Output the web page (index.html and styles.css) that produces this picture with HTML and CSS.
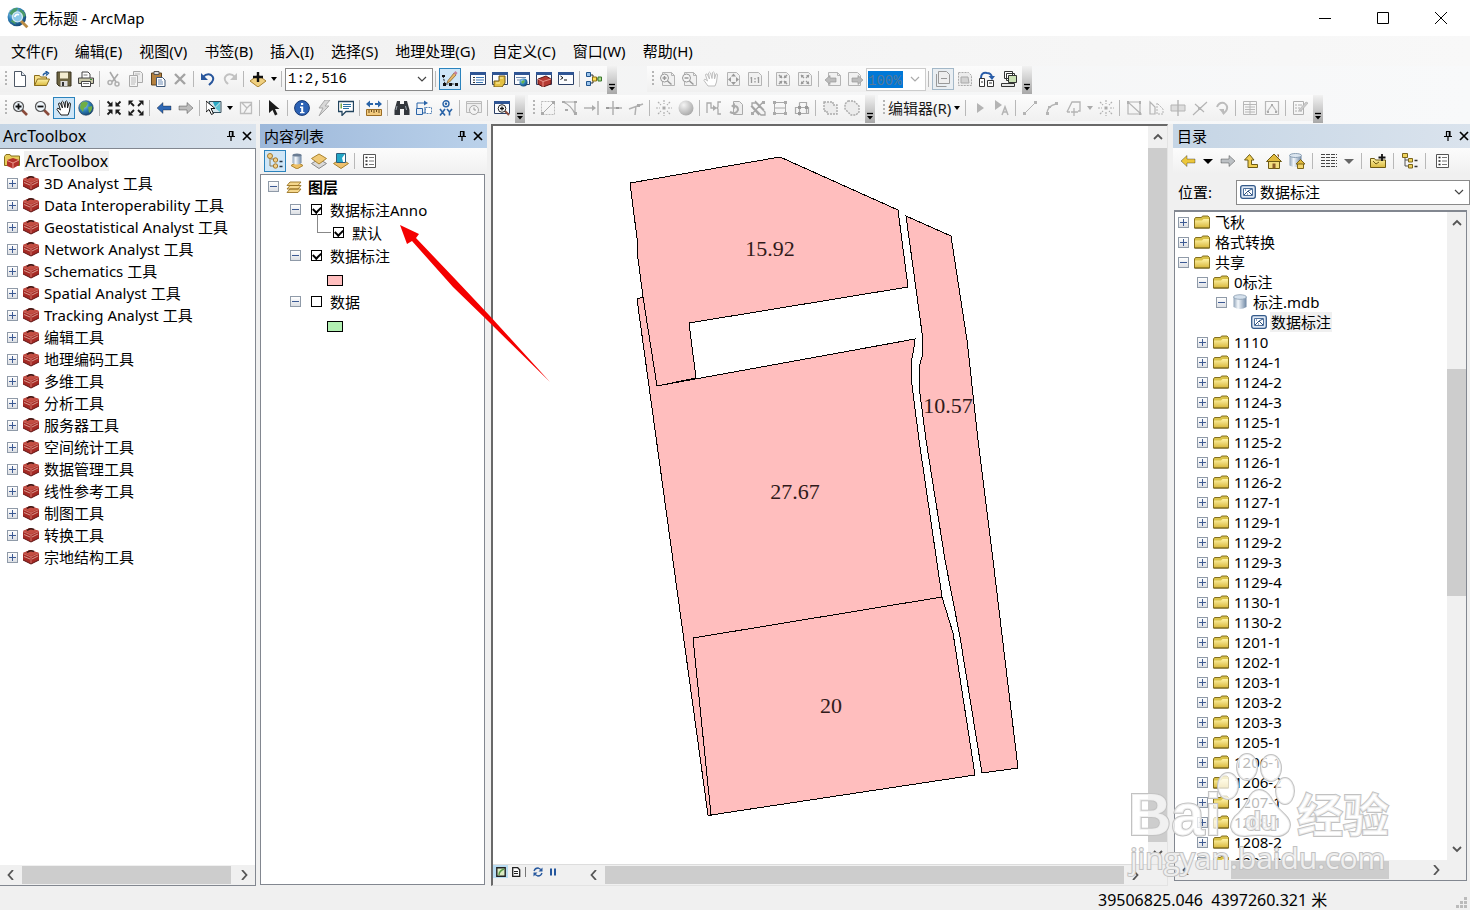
FILE: index.html
```html
<!DOCTYPE html>
<html lang="zh-CN">
<head>
<meta charset="utf-8">
<title>无标题 - ArcMap</title>
<link rel="stylesheet" href="styles.css">
</head>
<body>
<svg class="defs" aria-hidden="true">
  <defs>
    <linearGradient id="gFold" x1="0" y1="0" x2="0" y2="1"><stop offset="0" stop-color="#fff3a6"/><stop offset="1" stop-color="#d9b93f"/></linearGradient>
    <linearGradient id="gCyl"><stop offset="0" stop-color="#8fa3b8"/><stop offset=".35" stop-color="#f4f8fc"/><stop offset="1" stop-color="#6d86a3"/></linearGradient>
    <radialGradient id="gGlobe" cx=".35" cy=".3" r=".8"><stop offset="0" stop-color="#a8d8f4"/><stop offset=".5" stop-color="#2c7fb8"/><stop offset="1" stop-color="#123c66"/></radialGradient>
    <radialGradient id="gBall" cx=".35" cy=".3" r=".8"><stop offset="0" stop-color="#f4f4f4"/><stop offset="1" stop-color="#a2a2a2"/></radialGradient>
  </defs>
  <symbol id="new" viewBox="0 0 16 16"><path d="M2.500 .5h7l4 4v11h-11z" fill="#fff" stroke="#4d5765"/><path d="M9.500 .5v4h4" fill="#dfe6ee" stroke="#4d5765"/></symbol>
  <symbol id="open" viewBox="0 0 16 16"><path d="M.5 14.500v-10h5l1 1.500h6v2" fill="#f7e08a" stroke="#8a6d1c"/><path d="M.5 14.500l3-6.500h12l-3 6.500z" fill="url(#gFold)" stroke="#8a6d1c"/><path d="M9 4.500q1-3 4-2.500M11.500 0l3 2-2.500 2.500" fill="none" stroke="#205a9c" stroke-width="1.400"/></symbol>
  <symbol id="save" viewBox="0 0 16 16"><path d="M1 1h14v14H3l-2-2z" fill="#6c6340" stroke="#38331f"/><path d="M4 1.500h8v6H4z" fill="#f3ecd0"/><path d="M4.500 10h7v5h-7z" fill="#ddd"/><path d="M6 11h2v4H6z" fill="#333"/></symbol>
  <symbol id="print" viewBox="0 0 16 16"><path d="M4 7V1h6l2 2v4" fill="#fff" stroke="#444"/><path d="M.5 7h15v5.500H.5z" fill="#c9c7a9" stroke="#444"/><path d="M3.500 10.500h9v5h-9z" fill="#fff" stroke="#444"/><path d="M5 12.500h6M5.500 4h4" stroke="#777"/><path d="M12 8.500h2" stroke="#3a9a3a"/></symbol>
  <symbol id="cut" viewBox="0 0 16 16"><path d="M4 1l6 10M12 3L6 11" fill="none" stroke="#a8a8a8" stroke-width="1.600"/><circle cx="4" cy="11.500" r="2" fill="none" stroke="#b0b0b0" stroke-width="1.500"/><circle cx="11" cy="13" r="2" fill="none" stroke="#b0b0b0" stroke-width="1.500"/></symbol>
  <symbol id="copy" viewBox="0 0 16 16"><path d="M5.500 .5h7l2 2v9h-9z" fill="#eee" stroke="#aaa"/><path d="M1.500 4.500h8v11h-8z" fill="#f5f5f5" stroke="#aaa"/><path d="M3 7h5M3 9h5M3 11h5M3 13h4M7 3h5" stroke="#bbb"/></symbol>
  <symbol id="paste" viewBox="0 0 16 16"><path d="M1.500 2h10v12h-10z" fill="#b5813f" stroke="#5e4420"/><path d="M4 .5h5v3H4z" fill="#ddd" stroke="#555"/><path d="M6.500 6.500h6l2.500 2.500v6.500H6.500z" fill="#fff" stroke="#3f5675"/><path d="M8 9h4M8 11h5M8 13h5" stroke="#6d8bb5"/></symbol>
  <symbol id="del" viewBox="0 0 16 16"><path d="M3 3l10 10M13 3L3 13" stroke="#a3a3a3" stroke-width="2.400"/></symbol>
  <symbol id="undo" viewBox="0 0 16 16"><path d="M3 6q4-4 8-2 4 3 1 7l-3 3" fill="none" stroke="#28569c" stroke-width="2"/><path d="M1 2v7h7z" fill="#28569c"/></symbol>
  <symbol id="redo" viewBox="0 0 16 16"><path d="M13 6q-4-4-8-2-4 3-1 7l2 2" fill="none" stroke="#c2c2c2" stroke-width="2"/><path d="M15 2v7H8z" fill="#c2c2c2"/></symbol>
  <symbol id="add" viewBox="0 0 16 16"><path d="M8 4l8 6-8 6-8-6z" fill="#f0d080" stroke="#a9822f"/><path d="M8 1v10M3 6h10" stroke="#111" stroke-width="2.400"/></symbol>
  <symbol id="pen" viewBox="0 0 16 16"><path d="M1 5l2 8h12" fill="none" stroke="#222" stroke-dasharray="2 1"/><path d="M6 9.500l6-7.500 2 2-6.500 7-2.500 1z" fill="#e6b566" stroke="#7b5b2a" stroke-width=".7"/><path d="M11.500 2l2-2 2 2-1.500 2z" fill="#c5829b"/><path d="M0 4h3v2H0zM1 12h3v3H1zM7 12h3v3H7zM13 12h3v3h-3z" fill="#111"/></symbol>
  <symbol id="win" viewBox="0 0 16 16"><path d="M.5 1.500h15v12H.5z" fill="#fbfcfe" stroke="#2a3f66"/><path d="M0 1h16v3H0z" fill="#2f5594"/></symbol>
  <symbol id="toc" viewBox="0 0 16 16"><use href="#win"/><path d="M3 6.500h2M3 9h2M3 11.500h2" stroke="#333"/><path d="M6 6.500h8M6 9h8M6 11.500h7" stroke="#3e78b5"/></symbol>
  <symbol id="cat" viewBox="0 0 16 16"><use href="#win"/><path d="M2 10h5V5h6v7l-3 4H2z" fill="#e3c043" stroke="#71591a"/><path d="M8 7h3M4 12h4" stroke="#fff4b0"/></symbol>
  <symbol id="find" viewBox="0 0 16 16"><use href="#win"/><path d="M2 6.500h10M3 9h5" stroke="#6b87ab"/><circle cx="9.500" cy="11.500" r="4" fill="url(#gGlobe)"/><path d="M7 11q2-3 4-1l-2 3z" fill="#66b24f"/></symbol>
  <symbol id="boxwin" viewBox="0 0 16 16"><use href="#win"/><path d="M2 8l8-3 5 3v5l-8 3-5-3z" fill="#b53a32" stroke="#5e1714"/><path d="M2 8l5 2.500L15 8M7 10.500V16" fill="none" stroke="#e9938a"/></symbol>
  <symbol id="py" viewBox="0 0 16 16"><use href="#win"/><path d="M2.500 5l2.500 1.800-2.500 1.700M6 9h3" fill="none" stroke="#111"/></symbol>
  <symbol id="model" viewBox="0 0 16 16"><path d="M4 4h3v8H4M7 8h5" fill="none" stroke="#333"/><path d="M.5 1.500h4v4h-4zM.5 10.500h4v4h-4z" fill="#9bc4ed" stroke="#20558e"/><path d="M6.500 6h4v4h-4z" fill="#ffe05a" stroke="#8a6f12"/><path d="M12 6h3.500v4H12z" fill="#a8d98c" stroke="#3b772a"/></symbol>
  <symbol id="zin" viewBox="0 0 16 16"><path d="M10 10l5 5" stroke="#8a4a3a" stroke-width="2.600"/><circle cx="6.500" cy="6.500" r="5" fill="#eef5fb" stroke="#555" stroke-width="1.200"/><path d="M6.500 3.500v6M3.500 6.500h6" stroke="#111" stroke-width="1.800"/></symbol>
  <symbol id="zout" viewBox="0 0 16 16"><path d="M10 10l5 5" stroke="#8a4a3a" stroke-width="2.600"/><circle cx="6.500" cy="6.500" r="5" fill="#eef5fb" stroke="#555" stroke-width="1.200"/><path d="M3.500 6.500h6" stroke="#111" stroke-width="1.800"/></symbol>
  <symbol id="hand" viewBox="0 0 16 16"><path d="M5 15L1 9.500q0-2 2-.8L4.500 10 2.500 4q.3-1.800 1.800-.7L6.500 8 5.500 2q.8-1.700 2 0L9 7.500 9.500 1.500q1-1.200 1.800.2L11.500 8l1.500-5q1.200-.8 1.500.6L13.500 11 12 15z" fill="#fff" stroke="currentColor"/></symbol>
  <symbol id="globe" viewBox="0 0 16 16"><circle cx="8" cy="8" r="7.300" fill="url(#gGlobe)" stroke="#23405e" stroke-width=".6"/><path d="M3 3q4-3 7 0l-2 4-2 1-1 4-3-4zM10 7l4-1q1 4-3 7z" fill="#6fae45"/></symbol>
  <symbol id="inw" viewBox="0 0 16 16"><path d="M1.500 1.500l3 3M14.500 1.500l-3 3M1.500 14.500l3-3M14.500 14.500l-3-3" stroke="currentColor" stroke-width="1.800"/><path d="M6.500 1.500v5h-5zM9.500 1.500v5h5zM6.500 14.500v-5h-5zM9.500 14.500v-5h5z" fill="currentColor"/></symbol>
  <symbol id="outw" viewBox="0 0 16 16"><path d="M3 3l3 3M13 3l-3 3M3 13l3-3M13 13l-3-3" stroke="currentColor" stroke-width="1.800"/><path d="M.5 .5h5l-5 5zM15.500 .5h-5l5 5zM.5 15.500h5l-5-5zM15.500 15.500h-5l5-5z" fill="currentColor"/></symbol>
  <symbol id="arrl" viewBox="0 0 16 16"><path d="M1 8l6-5.500V6h8v4H7v3.500z" fill="currentColor" stroke="#0006" stroke-width=".8"/></symbol>
  <symbol id="arrr" viewBox="0 0 16 16"><path d="M15 8L9 2.500V6H1v4h8v3.500z" fill="currentColor" stroke="#0006" stroke-width=".8"/></symbol>
  <symbol id="selfeat" viewBox="0 0 16 16"><path d="M3 1.500h12v11H6z" fill="#d9e8ee" stroke="#34505e"/><path d="M7 2l7 0-5 5z" fill="#27a9c4"/><path d="M9 8l5-5v9z" fill="#5fc3d3"/><path d="M0 1v11l3-2.500 2.500 5 2-1-2.500-5h4z" fill="#fff" stroke="#111"/></symbol>
  <symbol id="clr" viewBox="0 0 16 16"><path d="M2.500 2.500h11v11h-11zM4 3l5 5 4-4M9 8l-3 5" fill="none" stroke="#bdbdbd" stroke-width="1.300"/></symbol>
  <symbol id="ptr" viewBox="0 0 16 16"><path d="M3 0v13l3.500-3 2.500 5.500 2.500-1.200L9 9h4.500z" fill="currentColor"/></symbol>
  <symbol id="info" viewBox="0 0 16 16"><circle cx="8" cy="8" r="7.400" fill="#2c62b5" stroke="#173872"/><path d="M7 3h2.200v2H7zM6 6.500h3.200V12h1.300v1.300H6V12h1.200V8H6z" fill="#fff"/></symbol>
  <symbol id="bolt" viewBox="0 0 16 16"><path d="M9 0L3 8h4l-4 8L13 6H9l5-6z" fill="#d8d8d8" stroke="#a9a9a9"/></symbol>
  <symbol id="note" viewBox="0 0 16 16"><path d="M.5 1.500h15v10H8L4 15.500v-4H.5z" fill="#fff" stroke="#23455f" stroke-width="1.300"/><path d="M5 4.500h8M5 6.500h8M5 8.500h6" stroke="#2871a3"/><path d="M2.500 3.500h1.500v5H2.500z" fill="#7ba84b"/></symbol>
  <symbol id="ruler" viewBox="0 0 16 16"><path d="M0 4l4-3.500V3h3v2H4v2.500zM16 4l-4-3.500V3H9v2h3v2.500z" fill="#2a64a8"/><path d="M.5 9.500h15v6H.5z" fill="#f2ca7e" stroke="#9b6d25"/><path d="M3 10v3M5.500 10v2M8 10v3M10.500 10v2M13 10v3" stroke="#6b4c1b"/></symbol>
  <symbol id="bino" viewBox="0 0 16 16"><path d="M3 1h3v3h4V1h3l2.500 9v5H10V9H6v6H.5v-5z" fill="#33373c"/><path d="M3 6l-1 4M11.500 6l1 4" stroke="#9aa3ad"/></symbol>
  <symbol id="route" viewBox="0 0 16 16"><path d="M1 8V3h8M5 13h4V7" fill="none" stroke="#2a64a8"/><path d="M8 .5L12 3 8 5.500z" fill="#2a64a8"/><path d="M.5 8.500h6v6h-6z" fill="#e8eef5" stroke="#2a64a8"/><path d="M9.500 7.500h6v6h-6z" fill="#fff" stroke="#5582b5" stroke-dasharray="2 1"/></symbol>
  <symbol id="gotoxy" viewBox="0 0 16 16"><circle cx="8" cy="3.800" r="3" fill="none" stroke="#2a64a8" stroke-width="1.400"/><circle cx="8" cy="3.800" r="1.200" fill="#2a64a8"/><path d="M2 9l5 6.500M7 9l-5 6.500M9 9l2.500 3L14 9M11.500 12v3.500" fill="none" stroke="#2a64a8" stroke-width="1.600"/></symbol>
  <symbol id="time" viewBox="0 0 16 16"><path d="M.5 1.500h15v11H.5z" fill="#eee" stroke="#bbb"/><path d="M.5 3.500h15" stroke="#bbb"/><circle cx="8" cy="10" r="4.500" fill="#f4f4f4" stroke="#aaa"/><path d="M8 7.500V10h2" fill="none" stroke="#999"/></symbol>
  <symbol id="viewer" viewBox="0 0 16 16"><use href="#win"/><path d="M11 11l4 4" stroke="#8a4a3a" stroke-width="2"/><circle cx="8" cy="8.500" r="3.800" fill="#fff" stroke="#222"/><path d="M8 6.500v4M6 8.500h4" stroke="#111" stroke-width="1.300"/></symbol>
  <symbol id="pg" viewBox="0 0 16 16"><path d="M3.500 1.500h9l3 3v10h-12z" fill="#f1f1f1" stroke="#b4b4b4"/><path d="M12.500 1.500v3h3" fill="none" stroke="#b4b4b4"/></symbol>
  <symbol id="pgin" viewBox="0 0 16 16"><use href="#pg"/><circle cx="5.500" cy="7" r="4" fill="#f6f6f6" stroke="#999"/><path d="M5.500 5v4M3.500 7h4M8.500 10l4 3.500" stroke="#999" stroke-width="1.500"/></symbol>
  <symbol id="pgout" viewBox="0 0 16 16"><use href="#pg"/><circle cx="5.500" cy="7" r="4" fill="#f6f6f6" stroke="#999"/><path d="M3.500 7h4M8.500 10l4 3.500" stroke="#999" stroke-width="1.500"/></symbol>
  <symbol id="pgall" viewBox="0 0 16 16"><path d="M2.500 1.500h9l3 3v10h-12z" fill="#f1f1f1" stroke="#b4b4b4"/><path d="M8.500 2.500l2.500 3H6zM8.500 14l2.500-3H6zM3 8.500l3-2.500v5zM14 8.500L11 6v5z" fill="#999"/></symbol>
  <symbol id="pg11" viewBox="0 0 16 16"><path d="M1.500 1.500h10l3 3v10h-13z" fill="#f1f1f1" stroke="#b4b4b4"/><path d="M4.500 6v6M11.500 6v6M3.500 7h1M10.500 7h1M8 7v1.500M8 10v1.500" stroke="#999" stroke-width="1.300"/></symbol>
  <symbol id="pginw" viewBox="0 0 16 16"><path d="M1.500 1.500h10l3 3v10h-13z" fill="#f1f1f1" stroke="#b4b4b4"/><path d="M4 4l3 3M12 4L9 7M4 13l3-3M12 13l-3-3" stroke="#999" stroke-width="1.600"/><path d="M7 4v3H4zM9 4v3h3zM7 13v-3H4zM9 13v-3h3z" fill="#999"/></symbol>
  <symbol id="pgoutw" viewBox="0 0 16 16"><path d="M1.500 1.500h10l3 3v10h-13z" fill="#f1f1f1" stroke="#b4b4b4"/><path d="M4 4l3 3M12 4L9 7M4 13l3-3M12 13l-3-3" stroke="#999" stroke-width="1.300"/><path d="M4 7V4h3zM12 7V4H9zM4 10v3h3zM12 10v3H9z" fill="#999"/></symbol>
  <symbol id="pgl" viewBox="0 0 16 16"><use href="#pg"/><path d="M0 9l5-4.500V7h6v4H5v2.500z" fill="#bbb" stroke="#999" stroke-width=".7"/></symbol>
  <symbol id="pgr" viewBox="0 0 16 16"><path d="M1.500 1.500h9l3 3v10h-12z" fill="#f1f1f1" stroke="#b4b4b4"/><path d="M16 9l-5-4.500V7H5v4h6v2.500z" fill="#bbb" stroke="#999" stroke-width=".7"/></symbol>
  <symbol id="draft" viewBox="0 0 16 16"><path d="M3.500 .5h8l3 3v9h-11z" fill="#eee" stroke="#999"/><path d="M1.500 3v12.500h10M6 7.500h6" fill="none" stroke="#999"/></symbol>
  <symbol id="focus" viewBox="0 0 16 16"><path d="M1.500 1.500h10l3 3v10h-13z" fill="#ececec" stroke="#aaa" stroke-dasharray="2 1"/><path d="M4 6h7l1 6H4z" fill="#d2d2d2" stroke="#aaa"/></symbol>
  <symbol id="chg" viewBox="0 0 16 16"><path d="M2 7q0-6 6-5 4 0 5 4" fill="none" stroke="#285ca8" stroke-width="2"/><path d="M9.500 5H16l-3 4z" fill="#285ca8"/><path d="M.5 7.500h5v8h-5zM8.500 9.500h6v6h-6z" fill="#fff" stroke="#333"/><path d="M2 11h2M10 12h3" stroke="#333"/></symbol>
  <symbol id="ddp" viewBox="0 0 16 16"><path d="M3.500 .5h8v7h-8zM5.500 2.500h8v7h-8z" fill="#fff" stroke="#333"/><path d="M7.500 4.500h8v7h-8z" fill="#cbe1b5" stroke="#333"/><path d="M.5 12.500h13v3H.5z" fill="#e6e6e6" stroke="#333"/></symbol>
  <symbol id="e1" viewBox="0 0 16 16"><path d="M1.500 1.500h13v13h-13z" fill="none" stroke="#bbb" stroke-dasharray="2 1"/><path d="M3 13L13 3" stroke="#aaa"/><path d="M1 12h3v3H1zM12 1h3v3h-3z" fill="#aaa"/></symbol>
  <symbol id="e2" viewBox="0 0 16 16"><path d="M1 2h12v12M1 2q8 3 12 12" fill="none" stroke="#aaa" stroke-width="1.200"/><path d="M0 1h3v2H0zM12 12h3v3h-3zM12 1h3v2h-3zM3 9h3v2H3z" fill="#aaa"/></symbol>
  <symbol id="e3" viewBox="0 0 16 16"><path d="M0 8h9M14 1v14" stroke="#b1b1b1" stroke-width="1.500"/><path d="M8 5l4 3-4 3z" fill="#aaa"/></symbol>
  <symbol id="e4" viewBox="0 0 16 16"><path d="M0 8h16M7 1v14" stroke="#b1b1b1" stroke-width="1.500"/><path d="M0 7h3v2H0zM10 7h3v2h-3z" fill="#999"/></symbol>
  <symbol id="e5" viewBox="0 0 16 16"><path d="M1 9l14-5M8 6l-1 9" stroke="#b1b1b1" stroke-width="1.500"/><path d="M9 4h3v3H9z" fill="#aaa"/></symbol>
  <symbol id="rays" viewBox="0 0 16 16"><path d="M8 0v4M8 12v4M0 8h4M12 8h4M2 2l3 3M14 2l-3 3M2 14l3-3M14 14l-3-3" stroke="#b0b0b0" stroke-width="1.200" stroke-dasharray="2 1"/><path d="M6.500 6.500h3v3h-3z" fill="#aaa"/></symbol>
  <symbol id="ball" viewBox="0 0 16 16"><circle cx="8" cy="8" r="7.500" fill="url(#gBall)"/></symbol>
  <symbol id="e6" viewBox="0 0 16 16"><path d="M1 13V3h4v5h4M15 2h-3v5l-1 1 1 1v5h3" fill="none" stroke="#aaa" stroke-width="1.300"/><path d="M7 5l4 3-4 3z" fill="#aaa"/></symbol>
  <symbol id="e7" viewBox="0 0 16 16"><path d="M5.500 1.500h6l3 3v10h-9z" fill="#eee" stroke="#aaa"/><path d="M2 12q6 3 8-2 0-4-4-4" fill="none" stroke="#aaa" stroke-width="2"/><path d="M7 3v6L3 6z" fill="#aaa"/></symbol>
  <symbol id="e8" viewBox="0 0 16 16"><path d="M2 3h4l9 9v3h-4L2 6zM13 2L2 14M5 1l9 9M1 6l8 9" fill="none" stroke="#a5a5a5" stroke-width="1.300"/><path d="M12 1h3v3h-3zM1 12h3v3H1z" fill="#aaa"/></symbol>
  <symbol id="e9" viewBox="0 0 16 16"><path d="M2.500 2.500h11v11h-11zM2 8h12" fill="none" stroke="#aaa"/><path d="M1 1h3v3H1zM12 1h3v3h-3zM1 12h3v3H1zM12 12h3v3h-3z" fill="#aaa"/></symbol>
  <symbol id="e10" viewBox="0 0 16 16"><path d="M1.500 7.500h13v6h-13zM5.500 2.500h7v11M5.500 2.500v13M1 7.500h14" fill="none" stroke="#aaa" stroke-width="1.200"/><path d="M4 6h3v3H4zM11 6h3v3h-3zM4 12h3v3H4z" fill="#999"/></symbol>
  <symbol id="e11" viewBox="0 0 16 16"><path d="M2 2h9v3h4v9H5v-3H2z" fill="#ececec" stroke="#aaa" stroke-dasharray="2 1" stroke-width="1.400"/></symbol>
  <symbol id="e12" viewBox="0 0 16 16"><path d="M4 1h6l5 5v6l-3 3H7L1 9V4z" fill="#ececec" stroke="#aaa" stroke-dasharray="2 1" stroke-width="1.400"/></symbol>
  <symbol id="f1" viewBox="0 0 16 16"><path d="M5 3v10l7-5z" fill="#b4b4b4"/></symbol>
  <symbol id="f2" viewBox="0 0 16 16"><path d="M1 0v10l7-5z" fill="#b4b4b4"/><path d="M8 15l3-8 3 8M9 12h4" fill="none" stroke="#b4b4b4" stroke-width="1.500"/></symbol>
  <symbol id="f3" viewBox="0 0 16 16"><path d="M3 13L13 3" stroke="#b4b4b4"/><path d="M1 12h3v3H1zM12 1h3v3h-3z" fill="#b4b4b4"/></symbol>
  <symbol id="f4" viewBox="0 0 16 16"><path d="M3 14q0-8 9-10" fill="none" stroke="#b4b4b4" stroke-width="1.300"/><path d="M2 12h3v3H2zM11 2h3v3h-3zM4 6h3v2H4z" fill="#b4b4b4"/></symbol>
  <symbol id="f5" viewBox="0 0 16 16"><path d="M1 12L6 2h8v9h-2M1 12h3M8 8v8M5 12h7" fill="none" stroke="#b4b4b4" stroke-width="1.300"/></symbol>
  <symbol id="f6" viewBox="0 0 16 16"><path d="M2 2v12h13zM2 2h12v12" fill="none" stroke="#b4b4b4" stroke-width="1.200"/><path d="M1 1h2v3H1zM13 1h2v3h-2zM13 12h2v3h-2z" fill="#b0b0b0"/></symbol>
  <symbol id="f7" viewBox="0 0 16 16"><path d="M2 2v12h5V7z" fill="none" stroke="#b4b4b4" stroke-width="1.200"/><path d="M9 3v11h6V9z" fill="none" stroke="#b4b4b4" stroke-dasharray="2 1"/></symbol>
  <symbol id="f8" viewBox="0 0 16 16"><path d="M1 5h14v6H1z" fill="#ddd" stroke="#b4b4b4"/><path d="M8 0v16" stroke="#b4b4b4" stroke-width="1.400"/></symbol>
  <symbol id="f9" viewBox="0 0 16 16"><path d="M1 15L15 2M3 4l9 8" stroke="#b4b4b4" stroke-width="1.200"/><path d="M6 7h3v3H6z" fill="#b4b4b4"/></symbol>
  <symbol id="f10" viewBox="0 0 16 16"><path d="M3 7q2-5 7-4 5 3 2 8l-3 3" fill="none" stroke="#bcbcbc" stroke-width="2"/><path d="M5 9h5v6z" fill="#bcbcbc"/></symbol>
  <symbol id="f11" viewBox="0 0 16 16"><path d="M1.500 1.500h13v13h-13zM1 4.500h13M8 2v12M3 7h10M3 9.500h10M3 12h10" fill="none" stroke="#b8b8b8"/></symbol>
  <symbol id="f12" viewBox="0 0 16 16"><path d="M1.500 1.500h13v13h-13zM3 12l5-7 5 7" fill="none" stroke="#b8b8b8" stroke-width="1.200"/><path d="M7 4h2v2H7zM3 11h2v2H3zM11 11h2v2h-2z" fill="#aaa"/></symbol>
  <symbol id="f13" viewBox="0 0 16 16"><path d="M1.500 1.500h10v13h-10zM3 5h2M3 8h2M3 11h2M6 5h4M6 8h2M6 11h4" fill="none" stroke="#b0b0b0"/><path d="M7 10l7-8 2 1-7 8z" fill="#ccc" stroke="#aaa" stroke-width=".6"/></symbol>
  <symbol id="folder" viewBox="0 0 16 16"><path d="M.5 14V5l1-1.500h6L8.500 2H14l1.500 1.500V14z" fill="#d8c149" stroke="#85701f"/><path d="M1 6.500h7L9.500 5H15v8.500H1z" fill="url(#gFold)"/><path d="M.5 14h15" stroke="#6b5a18"/></symbol>
  <symbol id="tbox" viewBox="0 0 16 16"><path d="M0 4l7-3 9 3v7l-8 4-8-4z" fill="#a52a25"/><path d="M0 4l7-3 9 3-8 3z" fill="#c34d42"/><path d="M0 4.500L8 8l8-3.500M8 8v7" fill="none" stroke="#d9877b" stroke-width=".8"/><path d="M4 3.500q3-3 7-1" fill="none" stroke="#3a1513" stroke-width="1.500"/><path d="M1 7.500L7 10M9 10l6-3" stroke="#e4b5a8" stroke-width=".8"/><path d="M0 11l8 4 8-4" fill="none" stroke="#5e1210"/></symbol>
  <symbol id="rootbox" viewBox="0 0 16 16"><path d="M.5 12.500V3.500L2 1.500h4L7 3h8.500v9.500z" fill="#e6cc5b" stroke="#85701f"/><path d="M3 7l6-2 6 2v5l-6 3.500L3 13z" fill="#b3312b"/><path d="M3 7.500L9 10l6-3M9 10v5" fill="none" stroke="#ec9a8e"/></symbol>
  <symbol id="db" viewBox="0 0 16 16"><path d="M1.500 3v10q6.500 4 13 0V3z" fill="url(#gCyl)"/><ellipse cx="8" cy="3" rx="6.500" ry="2.300" fill="#d4e0ec" stroke="#7f93a8" stroke-width=".7"/></symbol>
  <symbol id="fc" viewBox="0 0 16 16"><rect x=".7" y="1.700" width="14.600" height="12.600" rx="2" fill="#dfe9f5" stroke="#345a8a" stroke-width="1.300"/><path d="M3.500 4.500h9v7h-9z" fill="#fff" stroke="#4c6f9c"/><path d="M4 11l4-4 4 4M8 7l4-2M5 6h1M7 10h1" fill="none" stroke="#2d4f7d"/></symbol>
  <symbol id="layers" viewBox="0 0 16 16"><path d="M1 13.500L4 10h11l-3 3.500zM1 10L4 6.500h11L12 10zM1 6.500L4 3h11l-3 3.500z" fill="#f5d78c" stroke="#9a7425" stroke-width=".9"/></symbol>
  <symbol id="t1" viewBox="0 0 16 16"><path d="M3 4v9h5M4 6h4" fill="none" stroke="#8b7b55"/><circle cx="3" cy="3" r="2.500" fill="#f3cf86" stroke="#a37a2e"/><circle cx="8.500" cy="7" r="2.200" fill="#f3cf86" stroke="#a37a2e"/><circle cx="8.500" cy="13" r="2.200" fill="#f3cf86" stroke="#a37a2e"/><path d="M12.500 8.500h3M12.500 13.500h3" stroke="#234" stroke-width="1.400"/></symbol>
  <symbol id="t2" viewBox="0 0 16 16"><path d="M8 9l6 3.500L8 16l-6-3.500z" fill="#eebf62" stroke="#a9822f"/><path d="M3.500 2v8q4.500 3 9 0V2z" fill="url(#gCyl)"/><ellipse cx="8" cy="2" rx="4.500" ry="1.600" fill="#6a7c92"/></symbol>
  <symbol id="t3" viewBox="0 0 16 16"><path d="M8 6l7.500 4.500L8 15.500.5 10.500z" fill="#d9d9d9" stroke="#888"/><path d="M8 1l7.500 4.500L8 11 .5 5.500z" fill="#f0ca77" stroke="#a9822f"/></symbol>
  <symbol id="t4" viewBox="0 0 16 16"><path d="M8 6l7.500 4.500L8 15.500.5 10.500z" fill="#eec06d" stroke="#a9822f"/><path d="M3.500 .5h9v9h-9z" fill="#fff" stroke="#2c5d7c"/><path d="M4 1h8L9 5l1 4H4z" fill="#22a6c6"/></symbol>
  <symbol id="opt" viewBox="0 0 16 16"><path d="M2.500 1.500h12v13h-12z" fill="#fff" stroke="#555"/><path d="M4.500 4.500h2M4.500 8h2M4.500 11.500h2" stroke="#222" stroke-width="1.600"/><path d="M8 4.500h5M8 8h5M8 11.500h5" stroke="#777"/></symbol>
  <symbol id="up" viewBox="0 0 16 16"><path d="M5 14.500V7H1.500L6.500 1.500 11 7H8.500v4.500h6v3z" fill="#f1cf52" stroke="#6d5a14"/></symbol>
  <symbol id="home" viewBox="0 0 16 16"><path d="M2.500 8v7.500h11V8" fill="#f3dd7e" stroke="#6d5a14"/><path d="M.5 8.500L8 1l7.500 7.500z" fill="#e1ba3d" stroke="#6d5a14"/><path d="M6.500 10.500h3v5h-3zM11 1.500h2V5" fill="#8a5b28"/></symbol>
  <symbol id="dbhome" viewBox="0 0 16 16"><path d="M.5 2.500v10q6 3 12 0v-10z" fill="url(#gCyl)"/><ellipse cx="6.500" cy="2.500" rx="6" ry="2" fill="#dbe5ef" stroke="#8ba0b5"/><path d="M8.500 10.500v5h6v-5" fill="#f3d568" stroke="#7b651d"/><path d="M7 11l4.500-4.500L16 11z" fill="#e1ba3d" stroke="#7b651d"/></symbol>
  <symbol id="grid" viewBox="0 0 16 16"><path d="M0 1.500h16M0 4.500h16M0 7.500h16M0 10.500h16M0 13.500h16" stroke="#444" stroke-dasharray="4 1"/></symbol>
  <symbol id="conn" viewBox="0 0 16 16"><path d="M.5 14.500v-9h4l1 1.500h10v7.500z" fill="url(#gFold)" stroke="#6d5a14"/><path d="M3 8l3 3 3-2" fill="none" stroke="#6d5a14"/><path d="M12 1v7M8.500 4.500h7" stroke="#111" stroke-width="1.800"/></symbol>
  <symbol id="tree" viewBox="0 0 16 16"><path d="M3 4v9h4M3 7h4" fill="none" stroke="#555"/><path d="M.5 .5h5v4h-5zM6.500 5.500h4v3.500h-4zM6.500 11.500h4V15h-4z" fill="#efd35d" stroke="#7b651d"/><path d="M12.500 7.500h3M12.500 13.500h3" stroke="#333" stroke-width="1.400"/></symbol>
  <symbol id="pin" viewBox="0 0 10 10"><path d="M3 .5h4.500M3.500 .5v5M7 .5v5M6.300 .5v5M1 5.500h8M5 5.500V10" fill="none" stroke="#000" stroke-width="1.200"/></symbol>
  <symbol id="x" viewBox="0 0 10 10"><path d="M1 1l8 8M9 1L1 9" stroke="#000" stroke-width="1.700"/></symbol>
  <symbol id="cd" viewBox="0 0 10 10"><path d="M1 3l4 4 4-4" fill="none" stroke="currentColor" stroke-width="1.200"/></symbol>
  <symbol id="cu" viewBox="0 0 10 10"><path d="M1 7l4-4 4 4" fill="none" stroke="currentColor" stroke-width="1.800"/></symbol>
  <symbol id="cdn" viewBox="0 0 10 10"><path d="M1 3l4 4 4-4" fill="none" stroke="currentColor" stroke-width="1.800"/></symbol>
  <symbol id="cl" viewBox="0 0 10 10"><path d="M7 0L2.500 5 7 10" fill="none" stroke="currentColor" stroke-width="1.800"/></symbol>
  <symbol id="cr" viewBox="0 0 10 10"><path d="M3 0l4.500 5L3 10" fill="none" stroke="currentColor" stroke-width="1.800"/></symbol>
  <symbol id="ovf" viewBox="0 0 10 10"><path d="M2 2.500h6" stroke="#000" stroke-width="1.300"/><path d="M2 5h6L5 8.500z"/></symbol>
</svg>

<header class="title">
  <svg class="logo" viewBox="0 0 20 20"><circle cx="9" cy="9" r="8.500" fill="url(#gGlobe)"/><path d="M2 6q3-6 8-5l-2 4-3 3zM11 2q5 1 6 6l-3 2zM3 13l4-2 1 5z" fill="#4a9a68"/><path d="M12.500 12.500l6 6" stroke="#b98b44" stroke-width="2.600"/><circle cx="9.500" cy="9" r="4.500" fill="#8cc8e8" stroke="#d5e9f4" stroke-width="1.200"/><path d="M7 9q1-3 4-2" fill="none" stroke="#fff" stroke-width="1.500"/></svg>
  <h1>无标题 - ArcMap</h1>
  <div class="winbtns">
    <button aria-label="最小化"><svg viewBox="0 0 14 14"><path d="M1 7.500h12" stroke="#000"/></svg></button>
    <button aria-label="最大化"><svg viewBox="0 0 14 14"><path d="M1.500 1.500h11v11h-11z" fill="none" stroke="#000"/></svg></button>
    <button aria-label="关闭"><svg viewBox="0 0 14 14"><path d="M1 1l12 12M13 1L1 13" stroke="#000"/></svg></button>
  </div>
</header>

<nav class="menu">
  <button>文件(F)</button><button>编辑(E)</button><button>视图(V)</button><button>书签(B)</button><button>插入(I)</button><button>选择(S)</button><button>地理处理(G)</button><button>自定义(C)</button><button>窗口(W)</button><button>帮助(H)</button>
</nav>

<div class="bars">
  <div class="row">
    <div class="bar">
      <i class="grip"></i>
      <button aria-label="新建"><svg><use href="#new"/></svg></button><button aria-label="打开"><svg><use href="#open"/></svg></button><button aria-label="保存"><svg><use href="#save"/></svg></button><button aria-label="打印"><svg><use href="#print"/></svg></button><i class="sep"></i>
      <button aria-label="剪切"><svg><use href="#cut"/></svg></button><button aria-label="复制"><svg><use href="#copy"/></svg></button><button aria-label="粘贴"><svg><use href="#paste"/></svg></button><button aria-label="删除"><svg><use href="#del"/></svg></button><i class="sep"></i>
      <button aria-label="撤消"><svg><use href="#undo"/></svg></button><button aria-label="恢复"><svg><use href="#redo"/></svg></button><i class="sep"></i>
      <button aria-label="添加数据"><svg><use href="#add"/></svg></button><button class="caret" aria-label="添加数据选项"></button><i class="sep"></i>
      <span class="combo scale"><select aria-label="比例"><option>1:2,516</option></select><svg><use href="#cd"/></svg></span><i class="sep"></i>
      <button class="on" aria-label="编辑器工具条"><svg><use href="#pen"/></svg></button><i class="sep blank"></i>
      <button aria-label="内容列表"><svg><use href="#toc"/></svg></button><button aria-label="目录"><svg><use href="#cat"/></svg></button><button aria-label="搜索"><svg><use href="#find"/></svg></button><button aria-label="工具箱"><svg><use href="#boxwin"/></svg></button><button aria-label="Python"><svg><use href="#py"/></svg></button><i class="sep"></i>
      <button aria-label="模型构建器"><svg><use href="#model"/></svg></button><button class="ovf" aria-label="更多"><svg><use href="#ovf"/></svg></button>
    </div>
    <div class="bar layout">
      <i class="grip"></i>
      <button aria-label="页面放大"><svg><use href="#pgin"/></svg></button><button aria-label="页面缩小"><svg><use href="#pgout"/></svg></button><button class="dim" aria-label="页面平移"><svg><use href="#hand"/></svg></button><button aria-label="缩放整个页面"><svg><use href="#pgall"/></svg></button><button aria-label="缩放至 100%"><svg><use href="#pg11"/></svg></button><i class="sep"></i>
      <button aria-label="固定放大"><svg><use href="#pginw"/></svg></button><button aria-label="固定缩小"><svg><use href="#pgoutw"/></svg></button><i class="sep"></i>
      <button aria-label="上一页"><svg><use href="#pgl"/></svg></button><button aria-label="下一页"><svg><use href="#pgr"/></svg></button>
      <span class="combo pct"><select aria-label="页面比例" disabled><option>100%</option></select><svg><use href="#cd"/></svg></span><i class="sep"></i>
      <button class="on soft" aria-label="草稿模式"><svg><use href="#draft"/></svg></button><button aria-label="聚焦数据框"><svg><use href="#focus"/></svg></button><button aria-label="更改布局"><svg><use href="#chg"/></svg></button><button aria-label="数据驱动页面"><svg><use href="#ddp"/></svg></button><button class="ovf" aria-label="更多"><svg><use href="#ovf"/></svg></button>
    </div>
  </div>
  <div class="row">
    <div class="bar">
      <i class="grip"></i>
      <button aria-label="放大"><svg><use href="#zin"/></svg></button><button aria-label="缩小"><svg><use href="#zout"/></svg></button><button class="on" aria-label="平移"><svg><use href="#hand"/></svg></button><button aria-label="全图"><svg><use href="#globe"/></svg></button><i class="sep"></i>
      <button aria-label="固定比例放大"><svg><use href="#inw"/></svg></button><button aria-label="固定比例缩小"><svg><use href="#outw"/></svg></button><i class="sep"></i>
      <button class="blue" aria-label="返回"><svg><use href="#arrl"/></svg></button><button class="dim" aria-label="前进"><svg><use href="#arrr"/></svg></button><i class="sep"></i>
      <button aria-label="选择要素"><svg><use href="#selfeat"/></svg></button><button class="caret" aria-label="选择方式"></button><button aria-label="清除选择"><svg><use href="#clr"/></svg></button><i class="sep"></i>
      <button aria-label="选择元素"><svg><use href="#ptr"/></svg></button><i class="sep"></i>
      <button aria-label="识别"><svg><use href="#info"/></svg></button><button aria-label="超链接"><svg><use href="#bolt"/></svg></button><button aria-label="HTML 弹出窗口"><svg><use href="#note"/></svg></button><i class="sep"></i>
      <button aria-label="测量"><svg><use href="#ruler"/></svg></button><i class="sep"></i>
      <button aria-label="查找"><svg><use href="#bino"/></svg></button><button aria-label="查找路径"><svg><use href="#route"/></svg></button><button aria-label="转到 XY"><svg><use href="#gotoxy"/></svg></button><i class="sep"></i>
      <button aria-label="时间滑块"><svg><use href="#time"/></svg></button><i class="sep"></i>
      <button aria-label="查看器"><svg><use href="#viewer"/></svg></button><button class="ovf" aria-label="更多"><svg><use href="#ovf"/></svg></button>
    </div>
    <div class="bar adv">
      <i class="grip"></i>
      <button aria-label="复制要素"><svg><use href="#e1"/></svg></button><button aria-label="内圆角"><svg><use href="#e2"/></svg></button><button aria-label="延伸"><svg><use href="#e3"/></svg></button><button aria-label="修剪"><svg><use href="#e4"/></svg></button><button aria-label="线相交"><svg><use href="#e5"/></svg></button><i class="sep"></i>
      <button aria-label="拆分多部件"><svg><use href="#rays"/></svg></button><button aria-label="构造测地线"><svg><use href="#ball"/></svg></button><i class="sep"></i>
      <button aria-label="对齐至形状"><svg><use href="#e6"/></svg></button><button aria-label="替换几何"><svg><use href="#e7"/></svg></button><button aria-label="构造面"><svg><use href="#e8"/></svg></button><button aria-label="分割面"><svg><use href="#e9"/></svg></button><button aria-label="打断相交线"><svg><use href="#e10"/></svg></button><i class="sep"></i>
      <button aria-label="概化"><svg><use href="#e11"/></svg></button><button aria-label="平滑"><svg><use href="#e12"/></svg></button><button class="ovf" aria-label="更多"><svg><use href="#ovf"/></svg></button>
    </div>
    <div class="bar editor">
      <i class="grip"></i>
      <button class="edmenu">编辑器(R)<i class="tri"></i></button><i class="sep"></i>
      <button aria-label="编辑工具"><svg><use href="#f1"/></svg></button><button aria-label="编辑注记工具"><svg><use href="#f2"/></svg></button><i class="sep"></i>
      <button aria-label="直线段"><svg><use href="#f3"/></svg></button><button aria-label="弧段"><svg><use href="#f4"/></svg></button><button aria-label="追踪"><svg><use href="#f5"/></svg></button><button class="caret dim" aria-label="更多构造"></button><button aria-label="点"><svg><use href="#rays"/></svg></button><i class="sep"></i>
      <button aria-label="编辑折点"><svg><use href="#f6"/></svg></button><button aria-label="整形要素"><svg><use href="#f7"/></svg></button><button aria-label="裁剪面"><svg><use href="#f8"/></svg></button><button aria-label="分割"><svg><use href="#f9"/></svg></button><button aria-label="旋转"><svg><use href="#f10"/></svg></button><i class="sep"></i>
      <button aria-label="属性"><svg><use href="#f11"/></svg></button><button aria-label="草图属性"><svg><use href="#f12"/></svg></button><i class="sep"></i>
      <button aria-label="创建要素"><svg><use href="#f13"/></svg></button><button class="ovf" aria-label="更多"><svg><use href="#ovf"/></svg></button>
    </div>
  </div>
</div>

<main>
  <section class="panel toolbox">
    <header class="cap"><h2>ArcToolbox</h2><button aria-label="固定"><svg><use href="#pin"/></svg></button><button aria-label="关闭"><svg><use href="#x"/></svg></button></header>
    <div class="box">
      <ul class="tools">
        <li class="root"><svg><use href="#rootbox"/></svg><span class="sel">ArcToolbox</span></li>
        <li><button class="exp plus" aria-label="展开"></button><svg><use href="#tbox"/></svg>3D Analyst 工具</li>
        <li><button class="exp plus" aria-label="展开"></button><svg><use href="#tbox"/></svg>Data Interoperability 工具</li>
        <li><button class="exp plus" aria-label="展开"></button><svg><use href="#tbox"/></svg>Geostatistical Analyst 工具</li>
        <li><button class="exp plus" aria-label="展开"></button><svg><use href="#tbox"/></svg>Network Analyst 工具</li>
        <li><button class="exp plus" aria-label="展开"></button><svg><use href="#tbox"/></svg>Schematics 工具</li>
        <li><button class="exp plus" aria-label="展开"></button><svg><use href="#tbox"/></svg>Spatial Analyst 工具</li>
        <li><button class="exp plus" aria-label="展开"></button><svg><use href="#tbox"/></svg>Tracking Analyst 工具</li>
        <li><button class="exp plus" aria-label="展开"></button><svg><use href="#tbox"/></svg>编辑工具</li>
        <li><button class="exp plus" aria-label="展开"></button><svg><use href="#tbox"/></svg>地理编码工具</li>
        <li><button class="exp plus" aria-label="展开"></button><svg><use href="#tbox"/></svg>多维工具</li>
        <li><button class="exp plus" aria-label="展开"></button><svg><use href="#tbox"/></svg>分析工具</li>
        <li><button class="exp plus" aria-label="展开"></button><svg><use href="#tbox"/></svg>服务器工具</li>
        <li><button class="exp plus" aria-label="展开"></button><svg><use href="#tbox"/></svg>空间统计工具</li>
        <li><button class="exp plus" aria-label="展开"></button><svg><use href="#tbox"/></svg>数据管理工具</li>
        <li><button class="exp plus" aria-label="展开"></button><svg><use href="#tbox"/></svg>线性参考工具</li>
        <li><button class="exp plus" aria-label="展开"></button><svg><use href="#tbox"/></svg>制图工具</li>
        <li><button class="exp plus" aria-label="展开"></button><svg><use href="#tbox"/></svg>转换工具</li>
        <li><button class="exp plus" aria-label="展开"></button><svg><use href="#tbox"/></svg>宗地结构工具</li>
      </ul>
      <div class="hscroll"><button aria-label="向左"><svg><use href="#cl"/></svg></button><i class="thumb"></i><button aria-label="向右"><svg><use href="#cr"/></svg></button></div>
    </div>
  </section>

  <section class="panel toc">
    <header class="cap active"><h2>内容列表</h2><button aria-label="固定"><svg><use href="#pin"/></svg></button><button aria-label="关闭"><svg><use href="#x"/></svg></button></header>
    <div class="bar ptools">
      <button class="on" aria-label="按绘制顺序列出"><svg><use href="#t1"/></svg></button><button aria-label="按源列出"><svg><use href="#t2"/></svg></button><button aria-label="按可见性列出"><svg><use href="#t3"/></svg></button><button aria-label="按选择列出"><svg><use href="#t4"/></svg></button><i class="sep"></i><button aria-label="选项"><svg><use href="#opt"/></svg></button>
    </div>
    <div class="box">
      <ul class="layers">
        <li><button class="exp" aria-label="折叠"></button><svg><use href="#layers"/></svg><b>图层</b></li>
        <li class="l1"><button class="exp" aria-label="折叠"></button><label><input type="checkbox" checked>数据标注Anno</label></li>
        <li class="l2"><i class="elbow"></i><label><input type="checkbox" checked>默认</label></li>
        <li class="l1"><button class="exp" aria-label="折叠"></button><label><input type="checkbox" checked>数据标注</label></li>
        <li class="l3"><i class="swatch pink"></i></li>
        <li class="l1"><button class="exp" aria-label="折叠"></button><label><input type="checkbox">数据</label></li>
        <li class="l3"><i class="swatch green"></i></li>
      </ul>
    </div>
  </section>

  <section class="view">
    <div class="canvas">
      <svg class="map" role="img" aria-label="地图">
        <g transform="translate(-493 -126)">
          <g class="parcels">
            <path d="M637 299L643 297 657 386 915 339 914 347 911 364 911 377 919 440 942 597 693 638 711 815H708z"/>
            <path d="M630 183L780 157 898 210 908 287 689 323 696 378 657 386 643 297 637 251 638 246z"/>
            <path d="M693 638L942 597 953 633 975 775 711 815z"/>
            <path d="M906 216L951 236 967 340 978 440 993 560 1018 768 982 773 960 637 945 560 926 440 919 386 919 367 922 357 923 340z"/>
          </g>
          <g class="lbl"><text x="770" y="256">15.92</text><text x="948" y="413">10.57</text><text x="795" y="499">27.67</text><text x="831" y="713">20</text></g>
        </g>
      </svg>
      <div class="vscroll"><button aria-label="向上"><svg><use href="#cu"/></svg></button><i class="thumb"></i><button aria-label="向下"><svg><use href="#cdn"/></svg></button></div>
    </div>
    <div class="viewfoot">
      <button class="on2" aria-label="数据视图"><svg viewBox="0 0 10 10"><path d="M.8 .8h8.400v8.400H.8z" fill="#dcebc3" stroke="#222" stroke-width="1.400"/><path d="M3 8q0-4 5-6" fill="none" stroke="#559a45" stroke-width="1.400"/></svg></button>
      <button aria-label="布局视图"><svg viewBox="0 0 10 10"><path d="M1.700 .7h5l2 2v6.600h-7z" fill="#fff" stroke="#222" stroke-width="1.300"/><path d="M3 4.500h4M3 6.500h4" stroke="#222"/></svg></button>
      <i class="sep"></i>
      <button aria-label="刷新"><svg viewBox="0 0 10 10"><path d="M1 4q1-3 4-3l3 1.500M9 6q-1 3-4 3L2 7.500" fill="none" stroke="#25579d" stroke-width="1.300"/><path d="M9.500 .5v4h-4zM.5 9.500v-4h4z" fill="#25579d"/></svg></button>
      <button aria-label="暂停"><svg viewBox="0 0 10 10"><path d="M3 1.500v7M7 1.500v7" stroke="#25579d" stroke-width="2"/></svg></button>
      <div class="hscroll"><button aria-label="向左"><svg><use href="#cl"/></svg></button><i class="thumb"></i><button aria-label="向右"><svg><use href="#cr"/></svg></button></div>
    </div>
  </section>

  <section class="panel catalog">
    <header class="cap"><h2>目录</h2><button aria-label="固定"><svg><use href="#pin"/></svg></button><button aria-label="关闭"><svg><use href="#x"/></svg></button></header>
    <div class="bar ptools">
      <button class="gold" aria-label="后退"><svg><use href="#arrl"/></svg></button><button class="caret big" aria-label="历史"></button><button class="grey" aria-label="前进"><svg><use href="#arrr"/></svg></button><button aria-label="向上一级"><svg><use href="#up"/></svg></button><button aria-label="主目录"><svg><use href="#home"/></svg></button><button aria-label="默认地理数据库"><svg><use href="#dbhome"/></svg></button><i class="sep"></i><button aria-label="视图"><svg><use href="#grid"/></svg></button><button class="caret mid" aria-label="视图选项"></button><i class="sep"></i><button aria-label="连接到文件夹"><svg><use href="#conn"/></svg></button><i class="sep"></i><button aria-label="目录树"><svg><use href="#tree"/></svg></button><i class="sep"></i><button aria-label="选项"><svg><use href="#opt"/></svg></button>
    </div>
    <div class="loc">
      <label for="loc">位置:</label>
      <span class="combo"><svg class="lead"><use href="#fc"/></svg><select id="loc"><option>数据标注</option></select><svg><use href="#cd"/></svg></span>
    </div>
    <div class="box">
      <div class="scrollrow">
        <ul class="files">
          <li><button class="exp plus" aria-label="展开"></button><svg><use href="#folder"/></svg>飞秋</li>
          <li><button class="exp plus" aria-label="展开"></button><svg><use href="#folder"/></svg>格式转换</li>
          <li><button class="exp" aria-label="折叠"></button><svg><use href="#folder"/></svg>共享
            <ul>
              <li><button class="exp" aria-label="折叠"></button><svg><use href="#folder"/></svg>0标注
                <ul>
                  <li><button class="exp" aria-label="折叠"></button><svg><use href="#db"/></svg>标注.mdb
                    <ul><li class="leaf"><svg><use href="#fc"/></svg><span class="sel">数据标注</span></li></ul>
                  </li>
                </ul>
              </li>
              <li><button class="exp plus" aria-label="展开"></button><svg><use href="#folder"/></svg>1110</li>
              <li><button class="exp plus" aria-label="展开"></button><svg><use href="#folder"/></svg>1124-1</li>
              <li><button class="exp plus" aria-label="展开"></button><svg><use href="#folder"/></svg>1124-2</li>
              <li><button class="exp plus" aria-label="展开"></button><svg><use href="#folder"/></svg>1124-3</li>
              <li><button class="exp plus" aria-label="展开"></button><svg><use href="#folder"/></svg>1125-1</li>
              <li><button class="exp plus" aria-label="展开"></button><svg><use href="#folder"/></svg>1125-2</li>
              <li><button class="exp plus" aria-label="展开"></button><svg><use href="#folder"/></svg>1126-1</li>
              <li><button class="exp plus" aria-label="展开"></button><svg><use href="#folder"/></svg>1126-2</li>
              <li><button class="exp plus" aria-label="展开"></button><svg><use href="#folder"/></svg>1127-1</li>
              <li><button class="exp plus" aria-label="展开"></button><svg><use href="#folder"/></svg>1129-1</li>
              <li><button class="exp plus" aria-label="展开"></button><svg><use href="#folder"/></svg>1129-2</li>
              <li><button class="exp plus" aria-label="展开"></button><svg><use href="#folder"/></svg>1129-3</li>
              <li><button class="exp plus" aria-label="展开"></button><svg><use href="#folder"/></svg>1129-4</li>
              <li><button class="exp plus" aria-label="展开"></button><svg><use href="#folder"/></svg>1130-1</li>
              <li><button class="exp plus" aria-label="展开"></button><svg><use href="#folder"/></svg>1130-2</li>
              <li><button class="exp plus" aria-label="展开"></button><svg><use href="#folder"/></svg>1201-1</li>
              <li><button class="exp plus" aria-label="展开"></button><svg><use href="#folder"/></svg>1202-1</li>
              <li><button class="exp plus" aria-label="展开"></button><svg><use href="#folder"/></svg>1203-1</li>
              <li><button class="exp plus" aria-label="展开"></button><svg><use href="#folder"/></svg>1203-2</li>
              <li><button class="exp plus" aria-label="展开"></button><svg><use href="#folder"/></svg>1203-3</li>
              <li><button class="exp plus" aria-label="展开"></button><svg><use href="#folder"/></svg>1205-1</li>
              <li><button class="exp plus" aria-label="展开"></button><svg><use href="#folder"/></svg>1206-1</li>
              <li><button class="exp plus" aria-label="展开"></button><svg><use href="#folder"/></svg>1206-2</li>
              <li><button class="exp plus" aria-label="展开"></button><svg><use href="#folder"/></svg>1207-1</li>
              <li><button class="exp plus" aria-label="展开"></button><svg><use href="#folder"/></svg>1208-1</li>
              <li><button class="exp plus" aria-label="展开"></button><svg><use href="#folder"/></svg>1208-2</li>
              <li><button class="exp plus" aria-label="展开"></button><svg><use href="#folder"/></svg>1208-3</li>
            </ul>
          </li>
        </ul>
        <div class="vscroll"><button aria-label="向上"><svg><use href="#cu"/></svg></button><i class="thumb"></i><button aria-label="向下"><svg><use href="#cdn"/></svg></button></div>
      </div>
      <div class="hscroll"><button aria-label="向左"><svg><use href="#cl"/></svg></button><i class="thumb"></i><button aria-label="向右"><svg><use href="#cr"/></svg></button></div>
    </div>
  </section>

  <svg class="pointer" viewBox="0 0 152 160" aria-hidden="true"><path d="M1 1L20 10 17 14 57 56 90 91 151 158 89 97 54 63 13 17 8 20z" fill="#f40000"/></svg>
</main>

<footer class="status"><span>39506825.046&nbsp; 4397260.321 米</span><svg class="resize" viewBox="0 0 12 12"><path d="M8 1h3v3H8zM8 5h3v3H8zM4 5h3v3H4zM8 9h3v3H8zM4 9h3v3H4zM0 9h3v3H0z" fill="#bbb"/></svg></footer>

<svg class="mark" viewBox="0 0 270 130" aria-hidden="true">
  <g class="ink">
    <text class="wm" x="3" y="83">Bai</text>
    <ellipse cx="103" cy="34" rx="10" ry="13"/><ellipse cx="122" cy="15" rx="10" ry="13"/><ellipse cx="146" cy="16" rx="10" ry="13"/><ellipse cx="160" cy="39" rx="9" ry="13"/>
    <path d="M134 38q8 0 13 10 6 9 13 15 8 8 3 16-5 6-15 5-14-2-28 0-12 0-14-9 0-8 8-14 6-6 9-13 4-10 11-10z"/>
    <text class="wmu" x="120" y="78">du</text>
    <text class="wmc" x="172" y="80">经验</text>
    <text class="wms" x="5" y="117">jingyan.baidu.com</text>
  </g>
</svg>
</body>
</html>
```
FILE: styles.css
```css
* { box-sizing: border-box; }
body {
  margin: 0;
  height: 100vh;
  display: flex;
  flex-direction: column;
  position: relative;
  overflow: hidden;
  background: #f0f0f0;
  color: #000;
  font: 15px/20px "Noto Sans", "Noto Sans CJK SC", sans-serif;
}
button, select, input { font: inherit; color: inherit; margin: 0; }
button { border: 0; padding: 0; background: none; display: flex; align-items: center; justify-content: center; flex: none; }
h1, h2 { margin: 0; font: inherit; }
ul { list-style: none; margin: 0; padding: 0; }
svg { display: block; flex: none; }
.defs { position: absolute; width: 0; height: 0; }

.title { display: flex; align-items: center; height: 36px; padding-left: 7px; background: #fff; flex: none; }
.logo { width: 22px; height: 22px; margin-right: 4px; }
.title h1 { flex: 1; }
.winbtns { display: flex; }
.winbtns button { width: 58px; height: 34px; }
.winbtns svg { width: 14px; height: 14px; }

.menu { display: flex; gap: 17px; height: 30px; padding: 0 11px; background: linear-gradient(90deg, #f0f0f0, #f8f8f8); flex: none; }

.bars { background: linear-gradient(90deg, #f1f1f1, #f8f9fa); flex: none; }
.row { display: flex; height: 29px; }
.bar { display: flex; align-items: center; height: 26px; padding-left: 3px; background: linear-gradient(#fcfcfc, #f0f0f0); }
.bar button { width: 22px; height: 22px; color: #1b1b1b; }
.bar svg { width: 16px; height: 16px; }
.layout { margin-left: 30px; }
.adv { margin-left: 3px; }
.editor { margin-left: 3px; }
.grip { width: 2px; height: 16px; margin: 0 2px; flex: none; background: repeating-linear-gradient(#b5b5b5 0 2px, transparent 2px 4px); }
.sep { width: 1px; height: 16px; margin: 0 3px 0 2px; flex: none; background: #b8b8b8; }
.sep.blank { background: none; }
.bar .on { background: #cfe6f7; border: 1px solid #2b83bd; }
.bar .soft { background: #e9eef2; border-color: #a3b8c8; }
.bar .dim { color: #bdbdbd; }
.bar .blue { color: #2f68b5; }
.bar .gold { color: #ecc73c; }
.bar .grey { color: #bcc0c4; }
.bar .caret { width: 10px; }
.caret::before, .tri { content: ""; border: 3px solid transparent; border-top: 4px solid #000; border-bottom: 0; }
.caret.dim::before { border-top-color: #aaa; }
.caret.big::before { border: 5px solid transparent; border-top-color: #000; border-bottom: 0; }
.caret.mid::before { border: 5px solid transparent; border-top-color: #666; border-bottom: 0; }
.bar .ovf { width: 10px; height: 28px; align-items: flex-end; background: linear-gradient(#f2f2f2, #a8a8a8); align-self: flex-start; padding-bottom: 2px; margin-left: 2px; }
.ovf svg { width: 10px; height: 10px; }
.bar .edmenu { width: auto; padding: 0 3px 0 1px; gap: 3px; }

.combo { position: relative; display: flex; align-items: center; background: #fff; border: 1px solid #8a8a8a; height: 23px; color: #444; }
.combo select { appearance: none; border: 0; background: none; width: 100%; height: 100%; padding: 0 2px; color: #000; opacity: 1; }
.combo svg:last-child { position: absolute; right: 5px; width: 10px; height: 10px; pointer-events: none; }
.scale { width: 148px; }
.scale select, .pct select { font-family: "Liberation Mono", monospace; font-size: 14px; }
.pct { width: 60px; border-color: #ccc; color: #aaa; }
.pct select { margin: 1px 22px 1px 1px; padding: 0; height: 17px; background: #0078d7; color: #52799a; }

main { flex: 1; min-height: 0; display: flex; position: relative; margin-bottom: 1px; }
.panel { display: flex; flex-direction: column; flex: none; min-height: 0; }
.toolbox { width: 256px; margin-right: 4px; }
.toc { width: 227px; margin-right: 4px; }
.catalog { width: 297px; margin-left: 5px; }
.cap { display: flex; align-items: center; gap: 6px; height: 24px; padding: 0 4px 0 3px; background: linear-gradient(90deg, #c5d5e5, #dae3ed); flex: none; }
.cap.active { background: linear-gradient(90deg, #9db8da, #bad1ea); padding-left: 4px; }
.cap h2 { flex: 1; }
.cap svg { width: 10px; height: 10px; }
.toolbox h2, .root { font-size: 16px; }
.catalog .cap { padding: 0 1px 0 4px; }
.box { flex: 1; min-height: 0; display: flex; flex-direction: column; background: #fff; border: 1px solid #828790; }
.toolbox .box { border-left: 0; }
.toc .box { margin-right: 2px; margin-bottom: 1px; }
.ptools { height: 26px; flex: none; }
.toc .ptools { padding-left: 4px; }
.catalog .ptools button { width: 23px; }
.catalog .ptools .caret { width: 17px; }
.catalog .ptools .sep { margin: 0 4px; }

.tools { flex: 1; min-height: 0; overflow: hidden; padding-top: 1px; }
.tools li { display: flex; align-items: center; height: 22px; padding-left: 7px; white-space: nowrap; }
.tools svg { width: 16px; height: 16px; margin: 0 5px; }
.tools .root { padding-left: 0; }
.tools .root svg { margin: 0 4px; }
.sel { background: #f0f0f0; padding: 0 1px; }
.exp { width: 11px; height: 11px; border: 1px solid #8f9aa8; background: linear-gradient(#3c5a94, #3c5a94) center / 7px 1px no-repeat, linear-gradient(#fff, #dcdfe4); }
.exp.plus { background: linear-gradient(#3c5a94, #3c5a94) center / 7px 1px no-repeat, linear-gradient(#3c5a94, #3c5a94) center / 1px 7px no-repeat, linear-gradient(#fff, #dcdfe4); }

.layers li { display: flex; align-items: center; height: 23px; padding-left: 7px; }
.layers svg { width: 16px; height: 16px; margin: 0 6px 0 7px; }
.layers .l1 { padding-left: 29px; }
.layers .l2 { padding-left: 56px; }
.layers .l3 { padding: 3px 0 0 66px; }
.layers label { display: flex; align-items: center; gap: 8px; }
.l1 label { padding-left: 10px; }
.elbow { width: 14px; height: 19px; margin: -19px 2px 0 0; border: solid #888; border-width: 0 0 1px 1px; }
.layers input { appearance: none; width: 11px; height: 11px; border: 1px solid #000; background: #fff; display: flex; }
.layers input:checked::before { content: ""; width: 8px; height: 4px; margin: 1px 0 0 1px; border: solid #000; border-width: 0 0 2px 2px; transform: rotate(-45deg); }
.swatch { width: 16px; height: 11px; border: 1px solid #000; }
.pink { background: #ffbebe; }
.green { background: #b2f0b2; }

.view { flex: 1; min-width: 0; display: flex; flex-direction: column; border: 1px solid #828282; border-width: 2px 1px 1px 2px; border-color: #696969 #e3e3e3 #e3e3e3 #696969; }
.canvas { flex: 1; min-height: 0; display: flex; background: #fff; }
.map { flex: 1; min-width: 0; height: 100%; }
.parcels path { fill: #ffbebe; stroke: #000; stroke-width: 1; shape-rendering: crispEdges; }
.lbl text { font: 22px "Liberation Serif", serif; text-anchor: middle; fill: #301a1a; }
.viewfoot { display: flex; height: 21px; border-top: 1px solid #ddd; flex: none; }
.viewfoot > button { width: 15px; height: 13px; }
.viewfoot > button svg { width: 10px; height: 10px; }
.viewfoot .on2 { background: #b9dcf2; }
.viewfoot .sep { height: 10px; margin: 2px 4px 0 2px; background: #777; }
.viewfoot .hscroll { flex: 1; margin: 0 21px 0 23px; height: 20px; }

.hscroll, .vscroll { display: flex; background: #f0f0f0; color: #555; flex: none; }
.hscroll { height: 20px; }
.vscroll { flex-direction: column; width: 19px; }
.hscroll button { width: 22px; height: 20px; }
.vscroll button { width: 19px; height: 22px; }
.hscroll svg, .vscroll svg { width: 10px; height: 10px; }
.thumb { flex: 1; background: #cdcdcd; }
.hscroll .thumb { margin: 1px 0; }
.toolbox .hscroll .thumb { margin-right: 2px; }

.loc { display: flex; align-items: center; gap: 24px; height: 36px; padding-left: 5px; flex: none; }
.loc .combo { flex: 1; height: 25px; }
.loc .lead { width: 16px; height: 16px; margin: 0 2px 0 3px; }
.catalog .box { margin: 0 3px 5px 1px; border-width: 2px 1px 1px 1px; }
.scrollrow { flex: 1; min-height: 0; display: flex; }
.files { flex: 1; min-width: 0; height: 100%; overflow: hidden; padding-left: 3px; }
.files li { display: grid; grid-template-columns: 11px 16px 1fr; column-gap: 5px; grid-auto-rows: min-content; align-items: center; line-height: 20px; white-space: nowrap; }
.files .leaf { grid-template-columns: 16px 1fr; column-gap: 3px; padding-left: 16px; }
.files .sel { justify-self: start; }
.files svg { width: 16px; height: 16px; }
.files ul { grid-column: 1 / -1; padding-left: 19px; }
.catalog .vscroll .thumb { flex: 228; margin: 135px 0 242px; }
.catalog .hscroll { padding-right: 19px; }
.catalog .hscroll .thumb { margin: 1px 36px 1px 34px; }

.pointer { position: absolute; left: 399px; top: 100px; width: 152px; height: 160px; pointer-events: none; }

.status { flex: none; height: 23px; display: flex; justify-content: flex-end; align-items: center; padding-top: 3px; }
.status span { width: 358px; font-size: 16px; }
.resize { width: 12px; height: 12px; margin: 4px 2px 0 0; }

.mark { position: absolute; right: 75px; bottom: 28px; width: 270px; height: 130px; pointer-events: none; }
.ink { fill: #ffffffb8; stroke: #c2c2c2; stroke-width: 2; paint-order: stroke; }
.wm, .wmu { font: bold 60px "Liberation Sans", sans-serif; }
.wmu { font-size: 26px; }
.wmc { font: bold 46px "Noto Sans CJK SC", sans-serif; }
.wms { font: 30px "Open Sans", sans-serif; }
```
